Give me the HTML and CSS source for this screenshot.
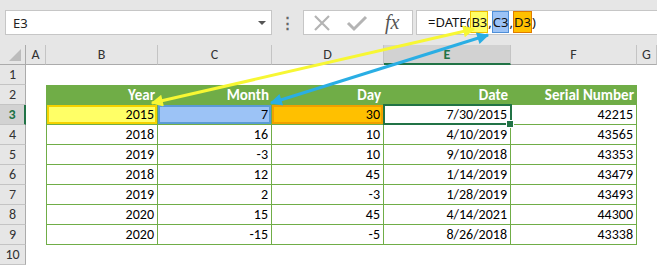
FILE: index.html
```html
<!DOCTYPE html>
<html lang="en">
<head>
  <meta charset="UTF-8">
  <title>DATE function</title>
  <link rel="stylesheet" href="styles.css">
</head>
<body>

<div class="toolbar">
  <div class="namebox">
    <span>E3</span>
    <span class="drop"></span>
  </div>
  <div class="dots">⋮</div>
  <div class="buttons">
    <svg class="ico" width="18" height="18" viewBox="0 0 18 18">
      <path d="M2 2 L16 16 M16 2 L2 16" stroke="#b4b4b4" stroke-width="2.2" fill="none"/>
    </svg>
    <svg class="ico" width="22" height="18" viewBox="0 0 22 18">
      <path d="M2 9 L8 15 L20 3" stroke="#b4b4b4" stroke-width="3" fill="none"/>
    </svg>
    <span class="fx">fx</span>
  </div>
  <div class="formula">=DATE(<span class="ref ref-b">B3</span>,<span class="ref ref-c">C3</span>,<span class="ref ref-d">D3</span>)</div>
</div>

<div class="sheet">
  <div class="corner"><span class="tri"></span></div>
  <div class="ch">A</div>
  <div class="ch">B</div>
  <div class="ch">C</div>
  <div class="ch">D</div>
  <div class="ch active">E</div>
  <div class="ch">F</div>
  <div class="ch">G</div>

  <div class="rh">1</div>
  <div></div><div></div><div></div><div></div><div></div><div></div><div></div>

  <div class="rh">2</div>
  <div></div>
  <div class="th">Year</div>
  <div class="th">Month</div>
  <div class="th">Day</div>
  <div class="th">Date</div>
  <div class="th">Serial Number</div>
  <div></div>

  <div class="rh active">3</div>
  <div></div>
  <div class="td first hl-b">2015</div>
  <div class="td hl-c">7</div>
  <div class="td hl-d">30</div>
  <div class="td selected">7/30/2015</div>
  <div class="td">42215</div>
  <div></div>

  <div class="rh">4</div>
  <div></div>
  <div class="td first">2018</div>
  <div class="td">16</div>
  <div class="td">10</div>
  <div class="td">4/10/2019</div>
  <div class="td">43565</div>
  <div></div>

  <div class="rh">5</div>
  <div></div>
  <div class="td first">2019</div>
  <div class="td">-3</div>
  <div class="td">10</div>
  <div class="td">9/10/2018</div>
  <div class="td">43353</div>
  <div></div>

  <div class="rh">6</div>
  <div></div>
  <div class="td first">2018</div>
  <div class="td">12</div>
  <div class="td">45</div>
  <div class="td">1/14/2019</div>
  <div class="td">43479</div>
  <div></div>

  <div class="rh">7</div>
  <div></div>
  <div class="td first">2019</div>
  <div class="td">2</div>
  <div class="td">-3</div>
  <div class="td">1/28/2019</div>
  <div class="td">43493</div>
  <div></div>

  <div class="rh">8</div>
  <div></div>
  <div class="td first">2020</div>
  <div class="td">15</div>
  <div class="td">45</div>
  <div class="td">4/14/2021</div>
  <div class="td">44300</div>
  <div></div>

  <div class="rh">9</div>
  <div></div>
  <div class="td first">2020</div>
  <div class="td">-15</div>
  <div class="td">-5</div>
  <div class="td">8/26/2018</div>
  <div class="td">43338</div>
  <div></div>

  <div class="rh">10</div>
  <div></div><div></div><div></div><div></div><div></div><div></div><div></div>
</div>

<!-- flechas de precedentes, encima de todo -->
<svg class="arrows" width="657" height="266" viewBox="0 0 657 266">
  <defs>
    <marker id="headY" viewBox="0 0 10 10" refX="9" refY="5" markerWidth="5" markerHeight="4" orient="auto-start-reverse">
      <path d="M0 0 L10 5 L0 10 Z" fill="#f7f733"/>
    </marker>
    <marker id="headB" viewBox="0 0 10 10" refX="9" refY="5" markerWidth="5" markerHeight="4" orient="auto-start-reverse">
      <path d="M0 0 L10 5 L0 10 Z" fill="#2aaee4"/>
    </marker>
  </defs>
  <line x1="152" y1="103" x2="474" y2="29" stroke="#f7f733" stroke-width="3" marker-start="url(#headY)" marker-end="url(#headY)"/>
  <line x1="271" y1="103" x2="488" y2="35" stroke="#2aaee4" stroke-width="3" marker-start="url(#headB)" marker-end="url(#headB)"/>
</svg>

</body>
</html>
```

FILE: styles.css
```css
body {
  margin: 0;
  width: 657px;
  height: 266px;
  overflow: hidden;
  background-color: #fff;
  font-family: "Carlito", "Liberation Sans Narrow", "Lato", sans-serif;
  position: relative;
}

/* barra de fórmulas */
.toolbar {
  display: flex;
  align-items: flex-start;
  height: 45px;
  padding: 10px 0 0 5px;
  box-sizing: border-box;
  background-color: #e6e6e6;
  font-family: "Noto Sans", "Open Sans", sans-serif;
}

.namebox {
  width: 267px;
  height: 25px;
  box-sizing: border-box;
  background: #fff;
  border: 1px solid #c6c6c6;
  display: flex;
  align-items: center;
  justify-content: space-between;
  padding: 0 5px 0 7px;
  font-size: 13px;
  color: #222;
}

.drop {
  width: 0;
  height: 0;
  border-left: 4px solid transparent;
  border-right: 4px solid transparent;
  border-top: 4px solid #555;
}

.dots {
  width: 31px;
  text-align: center;
  color: #666;
  font-size: 15px;
  line-height: 25px;
  font-weight: bold;
}

.buttons {
  width: 110px;
  height: 25px;
  box-sizing: border-box;
  background: #fff;
  border: 1px solid #c6c6c6;
  display: flex;
  align-items: center;
  gap: 15px;
  padding-left: 9px;
}

.fx {
  font-family: "Liberation Serif", serif;
  font-style: italic;
  font-size: 20px;
  color: #555;
  margin-left: 2px;
}

.formula {
  flex: 1;
  height: 25px;
  margin-left: 3px;
  margin-right: -2px;
  box-sizing: border-box;
  background: #fff;
  border: 1px solid #c6c6c6;
  padding-left: 11px;
  font-size: 13px;
  line-height: 23px;
  color: #111;
  white-space: nowrap;
}

.ref {
  padding: 1px 0;
  border: 1px solid;
}

.ref-b { background: #ffff66; border-color: #f0c000; }
.ref-c { background: #9cc3f6; border-color: #4f8fd8; }
.ref-d { background: #ffc000; border-color: #e07c00; }

/* hoja */
.sheet {
  display: grid;
  grid-template-columns: 26px 20px 112px 114px 112px 127px 126px 20px;
  grid-auto-rows: 20px;
  background: #fff;
}

.corner, .ch, .rh {
  background-color: #e6e6e6;
  box-sizing: border-box;
  color: #333;
  font-size: 14px;
  display: flex;
  align-items: center;
  justify-content: center;
}

.corner {
  border-right: 1px solid #ababab;
  border-bottom: 1px solid #ababab;
  position: relative;
}

.tri {
  position: absolute;
  right: 4px;
  bottom: 3px;
  width: 0;
  height: 0;
  border-left: 12px solid transparent;
  border-bottom: 12px solid #bcbcbc;
}

.ch {
  border-right: 1px solid #c4c4c4;
  border-bottom: 1px solid #ababab;
}

.ch.active {
  background-color: #d2d2d2;
  border-bottom: 2px solid #217346;
  color: #217346;
  font-weight: bold;
}

.rh {
  border-right: 1px solid #ababab;
  border-bottom: 1px solid #c4c4c4;
}

.rh.active {
  background-color: #d2d2d2;
  border-right: 2px solid #217346;
  color: #217346;
  font-weight: bold;
}

.th, .td {
  box-sizing: border-box;
  display: flex;
  align-items: center;
  justify-content: flex-end;
  padding-right: 3px;
}

.th {
  background-color: #70ad47;
  color: #fff;
  font-weight: bold;
  font-size: 15px;
}

.td {
  color: #000;
  font-size: 14px;
  border-right: 1px solid #70ad47;
  border-bottom: 1px solid #70ad47;
}

.td.first {
  border-left: 1px solid #70ad47;
}

.hl-b { background: #ffff66; box-shadow: inset 0 0 0 2px #f5d200; }
.hl-c { background: #9cc3f6; box-shadow: inset 0 0 0 2px #5b9bd5; }
.hl-d { background: #ffc000; box-shadow: inset 0 0 0 2px #f0a000; }

.selected {
  position: relative;
}

.selected::after {
  content: "";
  position: absolute;
  left: -1px;
  top: -1px;
  right: -2px;
  bottom: -1px;
  border: 2px solid #217346;
}

.selected::before {
  content: "";
  position: absolute;
  right: -4px;
  bottom: -4px;
  width: 6px;
  height: 6px;
  background: #217346;
  border: 1px solid #fff;
  z-index: 2;
}

.arrows {
  position: absolute;
  left: 0;
  top: 0;
  pointer-events: none;
}
```
